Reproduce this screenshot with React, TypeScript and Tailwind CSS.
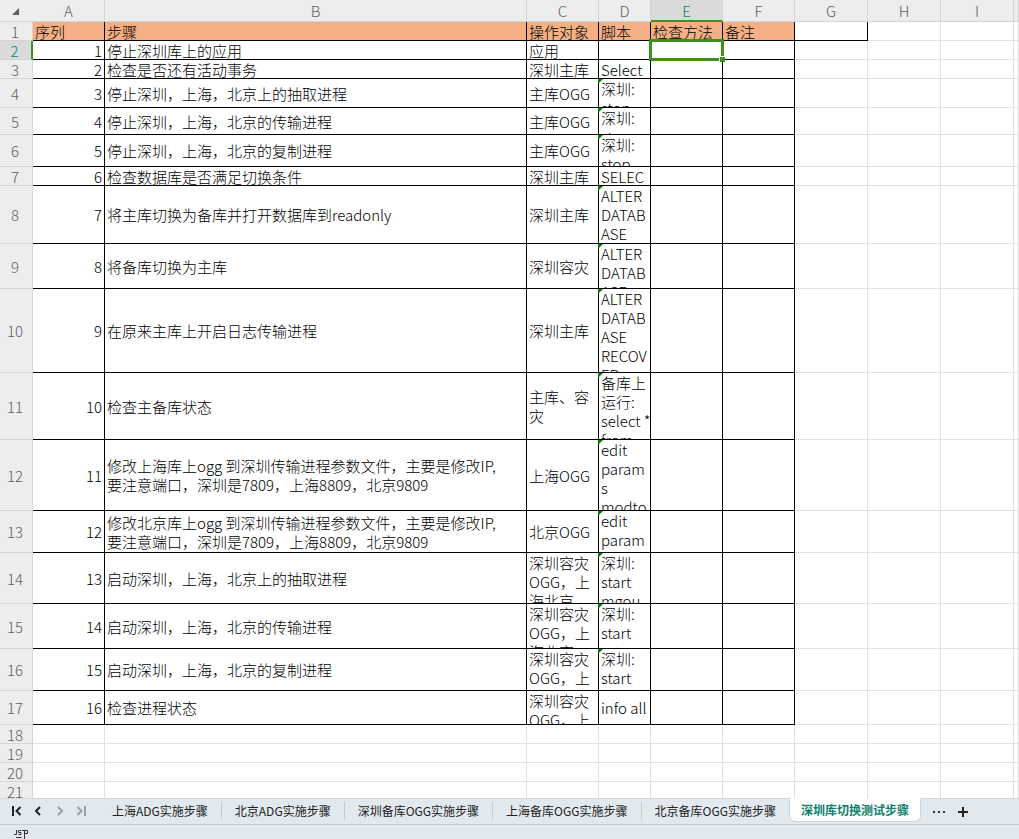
import React from "react";

type Row = {
  h: string;
  n?: number;
  step?: string;
  target?: string;
  script?: string;
  top?: boolean;
  targetTop?: boolean;
};

const rows: Row[] = [
  { h: "h-[18px]", n: 1, step: "停止深圳库上的应用", target: "应用" },
  { h: "h-[18px]", n: 2, step: "检查是否还有活动事务", target: "深圳主库", script: "Select" },
  { h: "h-[28px]", n: 3, step: "停止深圳，上海，北京上的抽取进程", target: "主库OGG", script: "深圳:\nstop", top: true },
  { h: "h-[26px]", n: 4, step: "停止深圳，上海，北京的传输进程", target: "主库OGG", script: "深圳:\nstop", top: true },
  { h: "h-[31px]", n: 5, step: "停止深圳，上海，北京的复制进程", target: "主库OGG", script: "深圳:\nstop", top: true },
  { h: "h-[18px]", n: 6, step: "检查数据库是否满足切换条件", target: "深圳主库", script: "SELEC" },
  { h: "h-[57px]", n: 7, step: "将主库切换为备库并打开数据库到readonly", target: "深圳主库", script: "ALTER\nDATAB\nASE", top: true },
  { h: "h-[44px]", n: 8, step: "将备库切换为主库", target: "深圳容灾", script: "ALTER\nDATAB\nASE", top: true },
  { h: "h-[83px]", n: 9, step: "在原来主库上开启日志传输进程", target: "深圳主库", script: "ALTER\nDATAB\nASE\nRECOV\nER", top: true },
  { h: "h-[66px]", n: 10, step: "检查主备库状态", target: "主库、容\n灾", script: "备库上\n运行:\nselect *\nfrom", top: true },
  { h: "h-[70px]", n: 11, step: "修改上海库上ogg 到深圳传输进程参数文件，主要是修改IP,\n要注意端口，深圳是7809，上海8809，北京9809", target: "上海OGG", script: "edit\nparam\ns\nmodto", top: true },
  { h: "h-[41px]", n: 12, step: "修改北京库上ogg 到深圳传输进程参数文件，主要是修改IP,\n要注意端口，深圳是7809，上海8809，北京9809", target: "北京OGG", script: "edit\nparam", top: true },
  { h: "h-[50px]", n: 13, step: "启动深圳，上海，北京上的抽取进程", target: "深圳容灾\nOGG，上\n海北京", script: "深圳:\nstart\nmgou", top: true, targetTop: true },
  { h: "h-[44px]", n: 14, step: "启动深圳，上海，北京的传输进程", target: "深圳容灾\nOGG，上\n海北京", script: "深圳:\nstart\nextsz", top: true, targetTop: true },
  { h: "h-[41px]", n: 15, step: "启动深圳，上海，北京的复制进程", target: "深圳容灾\nOGG，上", script: "深圳:\nstart", top: true, targetTop: true },
  { h: "h-[33px]", n: 16, step: "检查进程状态", target: "深圳容灾\nOGG，上", script: "info all", targetTop: true },
  { h: "h-[18px]" },
  { h: "h-[18px]" },
  { h: "h-[18px]" },
  { h: "h-[18px]" },
];

const titles = ["序列", "步骤", "操作对象", "脚本", "检查方法", "备注"];
const letters = ["A", "B", "C", "D", "E", "F", "G", "H", "I", ""];
const tabs = ["上海ADG实施步骤", "北京ADG实施步骤", "深圳备库OGG实施步骤", "上海备库OGG实施步骤", "北京备库OGG实施步骤"];

const black = "border-r border-b border-black p-0";
const grey = "border-r border-b border-[#e1e1e1] p-0";

function Content({ h, text, top, right }: { h: string; text?: string | number; top?: boolean; right?: boolean }) {
  return (
    <div
      className={`flex overflow-hidden whitespace-pre px-[2px] ${h} ${top ? "items-start" : "items-center"} ${right ? "justify-end" : ""}`}
    >
      {text}
    </div>
  );
}

function RowHead({ n, h }: { n: number; h: string }) {
  const active = n === 2;
  return (
    <th
      scope="row"
      className={`border-b border-b-[#d4d4d4] p-0 font-light ${active ? "border-r-2 border-r-[#3f8f1f] bg-[#dadada] text-[#0f7f6f]" : "border-r border-r-[#d4d4d4] bg-[#ededed] text-[#606060]"}`}
    >
      <div className={`flex items-center justify-center overflow-hidden pr-[2px] ${h}`}>{n}</div>
    </th>
  );
}

function Sheet() {
  return (
    <table className="w-full table-fixed border-separate border-spacing-0 text-left text-[15px] leading-[19px] font-light text-black">
      <colgroup>
        <col className="w-[33px]" />
        <col className="w-[72px]" />
        <col className="w-[422px]" />
        <col className="w-[72px]" />
        <col className="w-[52px]" />
        <col className="w-[72px]" />
        <col className="w-[72px]" />
        <col className="w-[73px]" />
        <col className="w-[73px]" />
        <col className="w-[73px]" />
        <col />
      </colgroup>
      <thead>
        <tr className="text-center text-[#606060]">
          <td className="border-b border-[#d4d4d4] bg-[#ededed] p-0">
            <svg viewBox="0 0 8 8" className="ml-3 h-2 w-2" fill="#606060" aria-hidden="true">
              <path d="M7 1v7H0z" />
            </svg>
          </td>
          {letters.map((l, i) => (
            <th
              key={i}
              scope="col"
              className={`p-0 font-light ${l === "E" ? "border-r border-b-2 border-r-[#d4d4d4] border-b-[#3f8f1f] bg-[#dadada] text-[#0f7f6f]" : "border-r border-b border-[#d4d4d4] bg-[#ededed]"}`}
            >
              <div className={l === "E" ? "h-5 pt-px" : "h-[21px] pt-px"}>{l}</div>
            </th>
          ))}
        </tr>
      </thead>
      <tbody>
        <tr>
          <RowHead n={1} h="h-[18px]" />
          {titles.map((t) => (
            <td key={t} className="border-r border-b border-black bg-[#f4b084] p-0">
              <Content h="h-[18px]" text={t} />
            </td>
          ))}
          <td className={black} />
          <td className={grey} />
          <td className={grey} />
          <td className={grey} />
        </tr>
        {rows.map((r, i) => {
          const line = r.n ? black : grey;
          return (
            <tr key={i}>
              <RowHead n={i + 2} h={r.h} />
              <td className={line}>
                <Content h={r.h} text={r.n} right />
              </td>
              <td className={line}>
                <Content h={r.h} text={r.step} />
              </td>
              <td className={line}>
                <Content h={r.h} text={r.target} top={r.targetTop} />
              </td>
              <td className={`${line} relative`}>
                <Content h={r.h} text={r.script} top={r.top} />
                {r.top && (
                  <svg viewBox="0 0 5 5" className="absolute top-0 -left-px h-[5px] w-[5px]" fill="#008000" aria-hidden="true">
                    <path d="M0 0h5L0 5z" />
                  </svg>
                )}
              </td>
              <td className={`${line} relative`}>
                {i === 0 && (
                  <>
                    <div className="absolute -inset-x-[2px] -inset-y-[2px] border-[3px] border-[#3f8f1f]" />
                    <div className="absolute -right-[3px] -bottom-[3px] z-10 h-[6px] w-[6px] border-t border-l border-white bg-[#3f8f1f]" />
                  </>
                )}
              </td>
              <td className={line} />
              <td className={grey} />
              <td className={grey} />
              <td className={grey} />
              <td className={grey} />
            </tr>
          );
        })}
      </tbody>
    </table>
  );
}

function NavButton({ label, d, dim }: { label: string; d: string; dim?: boolean }) {
  return (
    <button type="button" aria-label={label} className={`flex w-[22px] justify-center ${dim ? "text-[#9a9fa3]" : "text-[#222]"}`}>
      <svg viewBox="0 0 12 12" className="h-3 w-3" fill="none" stroke="currentColor" strokeWidth="2" aria-hidden="true">
        <path d={d} />
      </svg>
    </button>
  );
}

export default function App() {
  return (
    <div className="flex h-screen flex-col overflow-hidden bg-white font-['Noto_Sans_CJK_SC',sans-serif]">
      <main className="min-h-0 flex-1 overflow-hidden">
        <Sheet />
      </main>
      <nav className="flex h-[27px] shrink-0 items-stretch border-y border-t-[#d4d8da] border-b-[#c5cccf] bg-[#e1e9ee] text-xs text-[#222]">
        <div className="flex h-6 w-[99px] items-center pl-[5px]">
          <NavButton label="第一个工作表" d="M3 1v10M10.500 2L6.500 6l4 4" />
          <NavButton label="上一个工作表" d="M8 2L4 6l4 4" />
          <NavButton label="下一个工作表" d="M4 2l4 4-4 4" dim />
          <NavButton label="最后一个工作表" d="M1.500 2l4 4-4 4M9 1v10" dim />
        </div>
        {tabs.map((t, i) => (
          <button key={t} type="button" className="flex h-6 items-center whitespace-nowrap">
            <span className={`flex h-[18px] items-center px-[13px] ${i < 4 ? "border-r border-[#c5cccf]" : ""}`}>{t}</span>
          </button>
        ))}
        <button type="button" className="-mt-px mb-[2px] rounded-b-md border border-t-0 border-[#cdd5d8] bg-white px-[11px] font-bold whitespace-nowrap text-[#0f7f6f]">
          深圳库切换测试步骤
        </button>
        <button type="button" aria-label="更多工作表" className="ml-[11px] flex items-center">
          <svg viewBox="0 0 14 4" className="h-1 w-[14px]" fill="#333" aria-hidden="true">
            <path d="M1 1h2v2H1zM6 1h2v2H6zM11 1h2v2h-2z" />
          </svg>
        </button>
        <button type="button" aria-label="新建工作表" className="ml-3 flex items-center">
          <svg viewBox="0 0 10 10" className="h-[10px] w-[10px]" stroke="#222" strokeWidth="2" aria-hidden="true">
            <path d="M5 0v10M0 5h10" />
          </svg>
        </button>
      </nav>
      <footer className="h-[14px] shrink-0 overflow-hidden bg-[#e2eaf0] pt-[5px] pl-[14px]">
        <svg viewBox="0 0 15 9" className="h-[9px] w-[15px]" fill="none" stroke="#333" aria-hidden="true">
          <path d="M2.500 0v4.500H0M7 .5H4.500v2H7v2H4.500M8 .5h5.500v3h-3M10.500 .5V9M2 7.500h5.500" />
        </svg>
      </footer>
    </div>
  );
}
